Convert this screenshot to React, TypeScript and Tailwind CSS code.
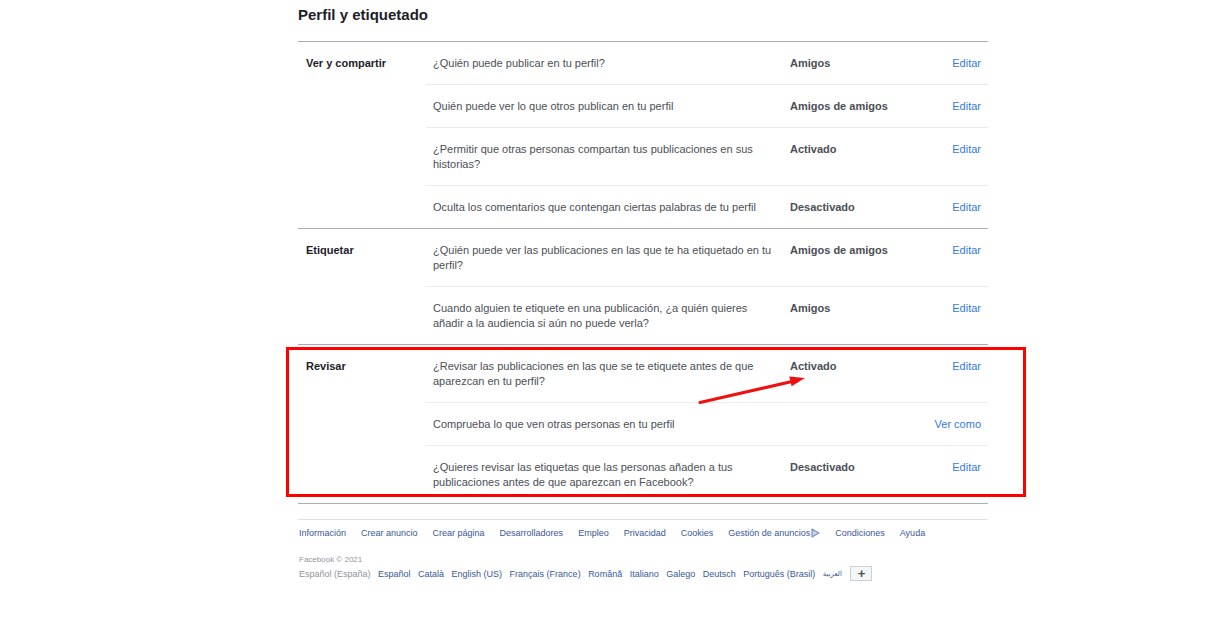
import React from "react";

type Row = { q: string; v: string; a: string };
type Section = { label: string; rows: Row[] };

const sections: Section[] = [
  {
    label: "Ver y compartir",
    rows: [
      { q: "¿Quién puede publicar en tu perfil?", v: "Amigos", a: "Editar" },
      { q: "Quién puede ver lo que otros publican en tu perfil", v: "Amigos de amigos", a: "Editar" },
      { q: "¿Permitir que otras personas compartan tus publicaciones en sus historias?", v: "Activado", a: "Editar" },
      { q: "Oculta los comentarios que contengan ciertas palabras de tu perfil", v: "Desactivado", a: "Editar" },
    ],
  },
  {
    label: "Etiquetar",
    rows: [
      { q: "¿Quién puede ver las publicaciones en las que te ha etiquetado en tu perfil?", v: "Amigos de amigos", a: "Editar" },
      { q: "Cuando alguien te etiquete en una publicación, ¿a quién quieres añadir a la audiencia si aún no puede verla?", v: "Amigos", a: "Editar" },
    ],
  },
  {
    label: "Revisar",
    rows: [
      { q: "¿Revisar las publicaciones en las que se te etiquete antes de que aparezcan en tu perfil?", v: "Activado", a: "Editar" },
      { q: "Comprueba lo que ven otras personas en tu perfil", v: "", a: "Ver como" },
      { q: "¿Quieres revisar las etiquetas que las personas añaden a tus publicaciones antes de que aparezcan en Facebook?", v: "Desactivado", a: "Editar" },
    ],
  },
];

const footerLinks = [
  "Información",
  "Crear anuncio",
  "Crear página",
  "Desarrolladores",
  "Empleo",
  "Privacidad",
  "Cookies",
  "Gestión de anuncios",
  "Condiciones",
  "Ayuda",
];

const langs = [
  "Español",
  "Català",
  "English (US)",
  "Français (France)",
  "Română",
  "Italiano",
  "Galego",
  "Deutsch",
  "Português (Brasil)",
];

function AdChoices() {
  return (
    <svg width="9" height="10" viewBox="0 0 9 10" className="ml-[1px] inline-block">
      <path d="M1 1 L8 5 L1 9 Z" fill="#c9d3ea" stroke="#7f93bd" strokeWidth="1.2" strokeLinejoin="round" />
    </svg>
  );
}

function SectionBlock({ s, highlight }: { s: Section; highlight?: boolean }) {
  return (
    <div className="relative flex border-t border-[#acacac]">
      <div className="w-[128px] shrink-0 pl-[8px] pt-[14px] text-[11px] font-bold leading-[15px] text-[#1d2129]">
        {s.label}
      </div>
      <div className="flex-1">
        {s.rows.map((r, i) => (
          <div
            key={i}
            className={`flex pt-[14px] pb-[13px] text-[11px] leading-[15px] ${i > 0 ? "border-t border-[#e9ebee]" : ""}`}
          >
            <div className="w-[364px] shrink-0 pl-[7px] pr-[15px] text-[#4b4f56]">{r.q}</div>
            <div className="flex-1 font-bold text-[#4b4f56]">{r.v}</div>
            <div className="pr-[7px] text-right text-[#3578e5]">{r.a}</div>
          </div>
        ))}
      </div>
      {highlight && (
        <>
          <div className="pointer-events-none absolute left-[-12px] right-[-38px] top-[2px] bottom-[6px] border-[3px] border-[#ff0000]" />
          <svg
            className="pointer-events-none absolute left-0 top-0"
            width="560"
            height="80"
            viewBox="0 0 560 80"
          >
            <line x1="402" y1="57.5" x2="494" y2="36.5" stroke="#f01010" strokeWidth="3" strokeLinecap="round" />
            <polygon points="507,33 491.2,31.4 493.6,41.2" fill="#f01010" />
          </svg>
        </>
      )}
    </div>
  );
}

export default function App() {
  return (
    <div
      className="min-h-[621px] w-full bg-white"
      style={{ fontFamily: '"Liberation Sans", Arial, "DejaVu Sans", sans-serif' }}
    >
      <div className="ml-[298px] w-[690px]">
        <div className="h-[41px] pt-[5px] text-[15px] font-bold leading-[20px] text-[#1d2129]">
          Perfil y etiquetado
        </div>
        {sections.map((s, i) => (
          <SectionBlock key={i} s={s} highlight={i === 2} />
        ))}
        <div className="border-t border-[#acacac]" />

        <div className="mt-[15px] border-t border-[#dddfe2] pt-[7px]">
          <div className="flex flex-wrap items-center gap-x-[15px] pl-[1px] text-[9px] leading-[12px] text-[#385898]">
            {footerLinks.map((l) => (
              <span key={l} className="inline-flex items-center">
                {l}
                {l === "Gestión de anuncios" && <AdChoices />}
              </span>
            ))}
          </div>
          <div className="mt-[16px] pl-[1px] text-[8px] leading-[10px] text-[#90949c]">Facebook © 2021</div>
          <div className="mt-[1px] flex items-center gap-x-[7.5px] pl-[1px] text-[9px] leading-[12px] text-[#385898]">
            <span className="text-[#90949c]">Español (España)</span>
            {langs.map((l) => (
              <span key={l}>{l}</span>
            ))}
            <span className="text-[7px]">العربية</span>
            <span className="ml-[1px] flex h-[15px] w-[22px] items-center justify-center border border-[#ccd0d5] bg-[#f5f6f7] text-[13px] font-bold leading-none text-[#4b4f56]">
              +
            </span>
          </div>
        </div>
      </div>
    </div>
  );
}
